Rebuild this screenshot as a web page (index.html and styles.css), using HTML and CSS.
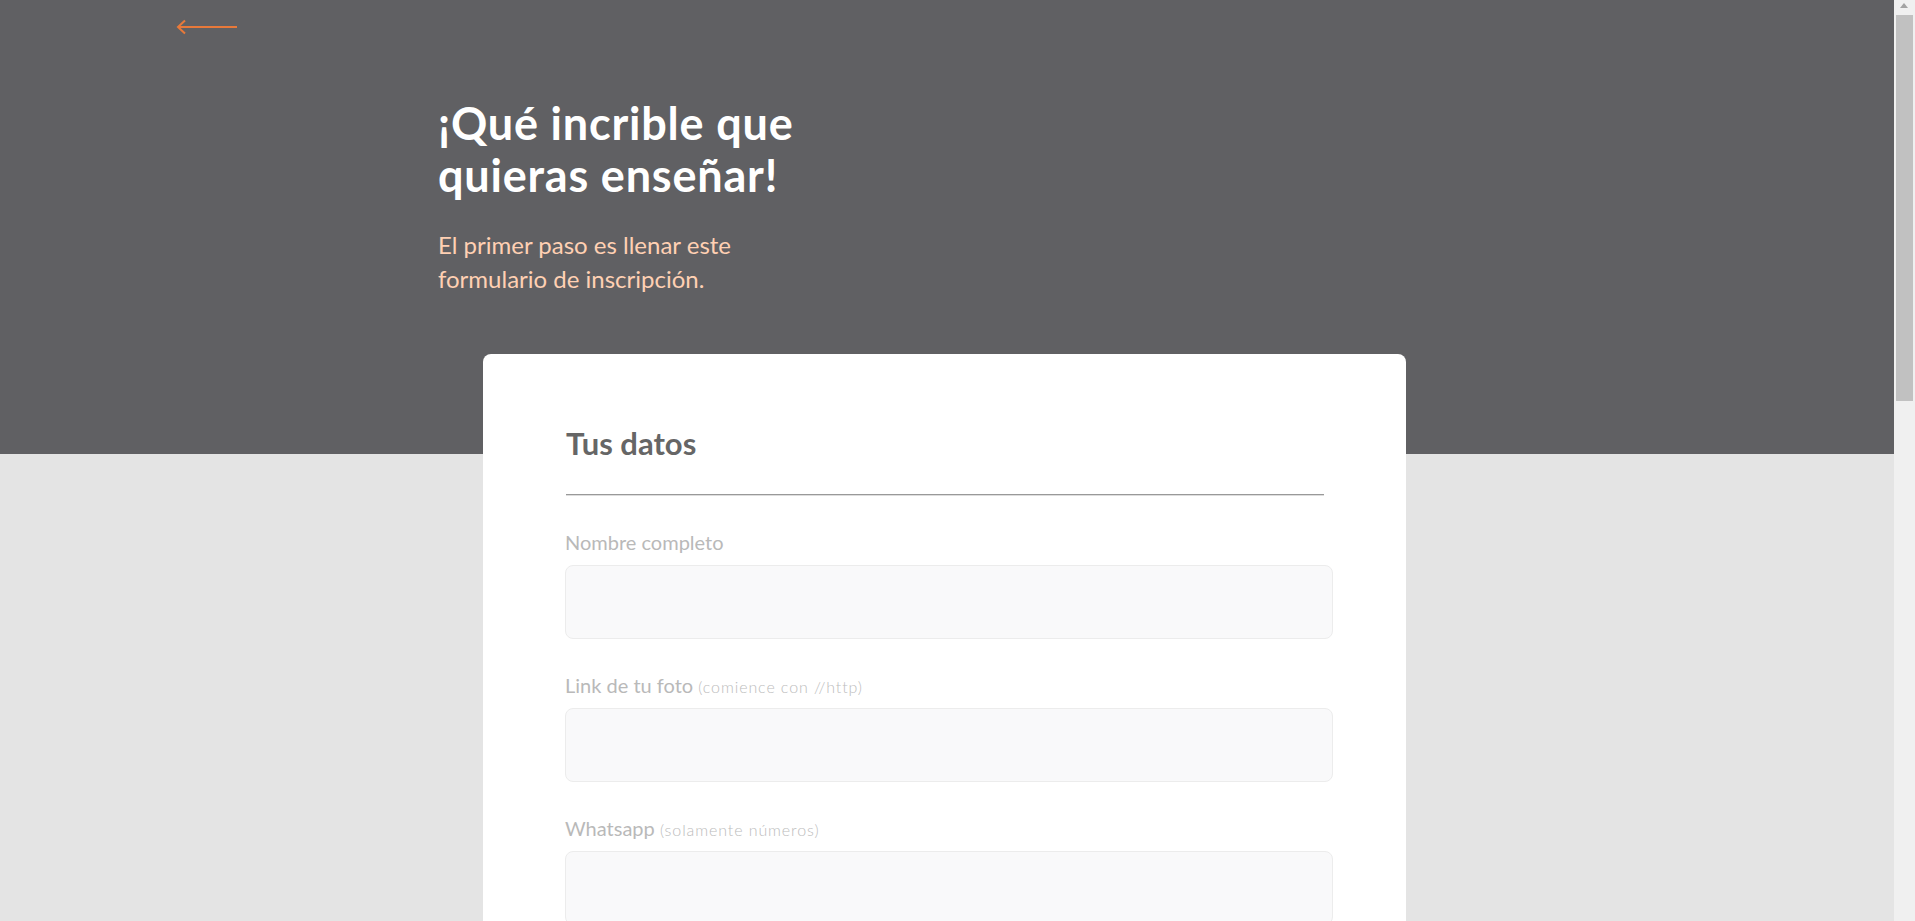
FILE: index.html
```html
<!DOCTYPE html>
<html lang="es">
<head>
<meta charset="utf-8">
<title>Inscripción</title>
<link rel="stylesheet" href="styles.css">
</head>
<body>
<header class="hero">
  <a class="back" href="#" aria-label="Volver">
    <svg width="62" height="16" viewBox="0 0 62 16"><path d="M2 8 H61 M9 1.5 L2 8 L9 14.5" fill="none" stroke="#e8793a" stroke-width="2"/></svg>
  </a>
  <div class="hero-text">
    <h1 class="hero-title">¡Qué incrible que quieras enseñar!</h1>
    <p class="hero-sub">El primer paso es llenar este formulario de inscripción.</p>
  </div>
</header>
<main class="card">
  <h2 class="card-title">Tus datos</h2>
  <hr class="divider">
  <div class="field">
    <label class="label">Nombre completo</label>
    <input class="input" type="text">
  </div>
  <div class="field">
    <label class="label">Link de tu foto <small class="hint">(comience con //http)</small></label>
    <input class="input" type="text">
  </div>
  <div class="field">
    <label class="label">Whatsapp <small class="hint">(solamente números)</small></label>
    <input class="input" type="text">
  </div>
</main>
<div class="scrollbar" aria-hidden="true">
  <span class="scroll-up"></span>
  <span class="scroll-thumb"></span>
</div>
</body>
</html>
```
FILE: styles.css
```css
html, body { margin: 0; padding: 0; }
body {
  background: #e4e4e4;
  font-family: Lato, "Open Sans", sans-serif;
  min-height: 2120px;
  margin-right: 21px;
}
.hero {
  background: #606063;
  height: 454px;
  box-sizing: border-box;
  padding-top: 19px;
}
.back {
  display: block;
  width: 62px;
  height: 16px;
  margin-left: 176px;
}
.back svg { display: block; }
.hero-text {
  margin-left: 438px;
  margin-top: 62px;
  width: 390px;
}
.hero-title {
  margin: 0;
  font-size: 45px;
  line-height: 52px;
  letter-spacing: 0.8px;
  font-weight: 700;
  color: #ffffff;
}
.hero-sub {
  margin: 27px 0 0;
  font-size: 24px;
  line-height: 34px;
  color: #ffd0b3;
  font-weight: 400;
}
.card {
  width: 923px;
  box-sizing: border-box;
  margin: -100px 0 0 483px;
  background: #fff;
  border-radius: 8px;
  padding: 71px 74px 60px 83px;
  min-height: 1700px;
}
.card-title {
  margin: 0;
  font-size: 31px;
  line-height: 36px;
  font-weight: 700;
  color: #666666;
}
.divider {
  margin: 33px 8px 0 0;
  border: 0;
  border-top: 1px solid #999;
  border-bottom: 1px solid #ddd;
  height: 0;
}
.field {
  margin-top: 34px;
  display: flex;
  flex-direction: column;
}
.label {
  font-size: 20px;
  line-height: 24px;
  color: #b9b9b9;
  margin-bottom: 11px;
  margin-left: -1px;
}
.hint {
  font-size: 16px;
  line-height: 1;
  font-weight: 300;
  letter-spacing: 0.9px;
  color: #bcbcbc;
}
.input {
  display: block;
  height: 74px;
  box-sizing: border-box;
  width: calc(100% + 2px);
  margin-left: -1px;
  background: #f9f9fa;
  border: 1px solid #ececec;
  border-radius: 8px;
  font: inherit;
}
.scrollbar {
  position: fixed;
  top: 0;
  right: 0;
  width: 21px;
  height: 100%;
  background: #f0f0f0;
}
.scroll-up {
  position: absolute;
  top: 3px;
  left: 6px;
  width: 0;
  height: 0;
  border-left: 4.5px solid transparent;
  border-right: 4.5px solid transparent;
  border-bottom: 5px solid #a3a3a3;
}
.scroll-thumb {
  position: absolute;
  top: 15px;
  left: 2px;
  width: 17px;
  height: 386px;
  background: #c1c1c1;
}
```
